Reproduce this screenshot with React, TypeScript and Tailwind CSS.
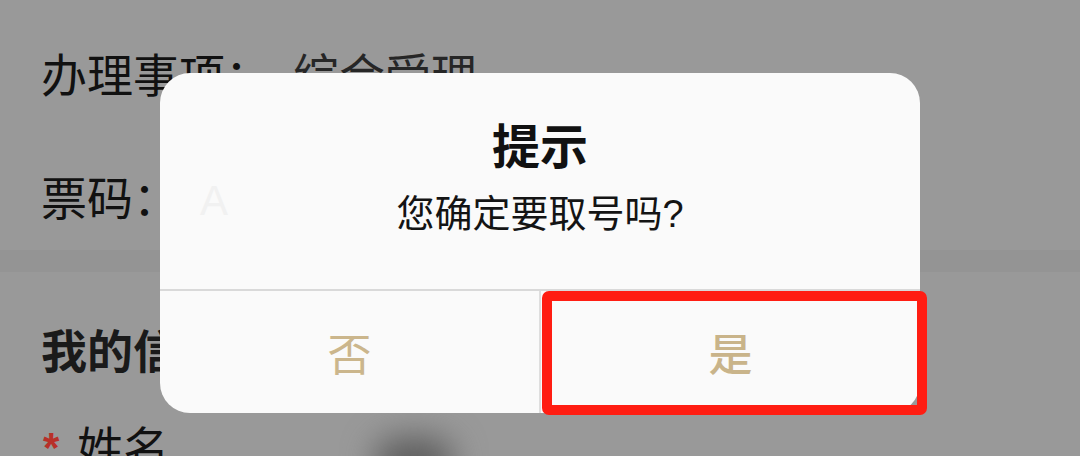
const cjk = "font-['Noto_Sans_CJK_SC','Noto_Sans',sans-serif]";

export default function App() {
  return (
    <div className={`relative w-[1080px] h-[456px] overflow-hidden bg-[#999999] ${cjk}`}>
      {/* page behind the overlay */}
      <div className="flex flex-col pl-[41px] pt-[44px]">
        <div className="flex items-center h-[56px] text-[46px] leading-[56px] text-[#111111]">
          <span>办理事项：</span>
          <span className="ml-[22px] text-[#262626]">综合受理</span>
        </div>
        <div className="flex items-center h-[56px] mt-[67px] text-[46px] leading-[56px] text-[#111111]">
          <span>票码：</span>
        </div>
      </div>
      <div className="mt-[27px] h-[22px] bg-[#949494]" />
      <div className="flex flex-col pl-[41px]">
        <div className="mt-[48px] h-[56px] text-[46px] leading-[56px] font-bold text-[#1a1a1a]">我的信息</div>
        <div className="mt-[41px] flex items-center h-[56px] text-[46px] leading-[56px] text-[#111111]">
          <span className="text-[#b8302a] text-[42px] font-bold leading-[40px] ml-[2px] mr-[18px] mt-[6px] font-['Liberation_Sans',sans-serif]">*</span>
          <span>姓名</span>
          <span className="ml-[205px] mt-[34px] w-[80px] h-[50px] rounded-full bg-[#5e5e5e] blur-lg" />
        </div>
      </div>

      {/* dialog */}
      <div className="absolute left-[160px] top-[73px] w-[760px] h-[340px] rounded-[30px] bg-[#fafafa] flex flex-col">
        <div className="relative flex flex-col items-center h-[216px]">
          <span className="absolute left-[40px] top-[100px] text-[42px] leading-[56px] font-['Liberation_Sans',sans-serif] text-[#f1f1f1]">A</span>
          <div className="mt-[42px] text-[48px] leading-[56px] font-bold text-[#111111]">提示</div>
          <div className="mt-[16px] text-[38px] leading-[48px] text-[#141414]">
            您确定要取号吗<span className="font-['Liberation_Sans',sans-serif]">?</span>
          </div>
        </div>
        <div className="relative flex flex-1 border-t-2 border-[#d9d9d9]">
          <div className="flex-1 flex items-center justify-center text-[44px] text-[#cbb68c] border-r-2 border-[#dedede]">否</div>
          <div className="flex-1 flex items-center justify-center text-[44px] font-medium text-[#c9b48a]">是</div>
        </div>
      </div>

      {/* annotation box */}
      <div className="absolute left-[542px] top-[291px] w-[385px] h-[124px] border-[10px] border-[#ff1d12] rounded-[7px]" />
    </div>
  );
}
